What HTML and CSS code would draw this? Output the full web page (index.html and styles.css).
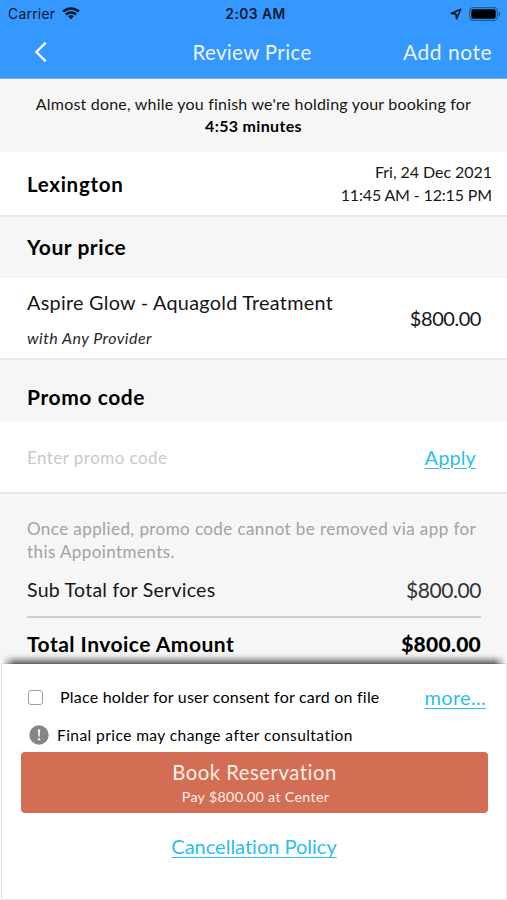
FILE: index.html
```
<!DOCTYPE html>
<html lang="en">
<head>
<meta charset="utf-8">
<title>Review Price</title>
<link rel="stylesheet" href="styles.css">
</head>
<body>
<div class="screen">
  <header class="top">
    <div class="status">
      <div class="status-left">
        <span class="carrier">Carrier</span>
        <svg class="wifi" width="18" height="13" viewBox="0 0 18 13" fill="none" stroke="#06182c" stroke-width="2.5"><path d="M1.2 4.7a11 11 0 0 1 15.6 0M3.9 7.6a7.2 7.2 0 0 1 10.2 0"/><path d="M9 12.2 6.2 9.4a4 4 0 0 1 5.6 0Z" fill="#06182c" stroke="none"/></svg>
      </div>
      <span class="clock">2:03 AM</span>
      <div class="status-right">
        <svg width="12" height="12" viewBox="0 0 12 12" fill="none" stroke="#06182c" stroke-width="1.6" stroke-linejoin="round"><path d="M10.8 1.2 1.2 5.4l4.8.7.5 4.8Z"/></svg>
        <svg width="32" height="14" viewBox="0 0 32 14"><rect x=".7" y=".7" width="27.6" height="12.6" rx="3.6" fill="none" stroke="#1e5b98" stroke-width="1.2"/><rect x="2.3" y="2.3" width="24.4" height="9.4" rx="2" fill="#000"/><path d="M29.8 4.6c1.8.6 1.8 4.2 0 4.8Z" fill="#1e5b98"/></svg>
      </div>
    </div>
    <nav class="nav">
      <svg class="back" width="14" height="22" viewBox="0 0 14 22" fill="none" stroke="#fff" stroke-width="2.3"><path d="M11.8 1.6 2.4 11l9.4 9.4"/></svg>
      <h1 class="nav-title">Review Price</h1>
      <a class="nav-action">Add note</a>
    </nav>
  </header>

  <section class="notice">
    <p class="notice-text">Almost done, while you finish we're holding your booking for</p>
    <p class="notice-time">4:53 minutes</p>
  </section>

  <section class="row place">
    <span class="place-name">Lexington</span>
    <div class="when"><p class="date">Fri, 24 Dec 2021</p><p class="time">11:45 AM - 12:15 PM</p></div>
  </section>

  <h2 class="section-head price-head">Your price</h2>
  <section class="row item">
    <div class="item-info"><p class="item-name">Aspire Glow - Aquagold Treatment</p><p class="item-by">with Any Provider</p></div>
    <span class="amount">$800.00</span>
  </section>

  <h2 class="section-head promo-head">Promo code</h2>
  <section class="row promo">
    <span class="promo-input">Enter promo code</span>
    <a class="link apply">Apply</a>
  </section>

  <section class="summary">
    <p class="promo-note">Once applied, promo code cannot be removed via app for<br>this Appointments.</p>
    <div class="line subtotal"><span class="sub-label">Sub Total for Services</span><span class="sub-amount">$800.00</span></div>
    <div class="line total"><span class="total-label">Total Invoice Amount</span><span class="total-amount">$800.00</span></div>
  </section>

  <footer class="sheet">
    <div class="consent">
      <span class="checkbox"></span>
      <span class="consent-text">Place holder for user consent for card on file</span>
      <a class="link more">more...</a>
    </div>
    <div class="warning">
      <svg width="20" height="20" viewBox="0 0 20 20"><circle cx="10" cy="10" r="9.7" fill="#858585"/><path d="M8.9 4.2h2.2l-.4 7.5H9.3Z" fill="#f4f4f4"/><circle cx="10" cy="14.3" r="1.2" fill="#f4f4f4"/></svg>
      <span class="warning-text">Final price may change after consultation</span>
    </div>
    <div class="book"><span class="book-title">Book Reservation</span><span class="book-sub">Pay $800.00 at Center</span></div>
    <a class="link policy">Cancellation Policy</a>
  </footer>
</div>
</body>
</html>
```
FILE: styles.css
```
* { box-sizing: border-box; }
body, h1, h2, p { margin: 0; }
body { font-family: Lato, "Open Sans", sans-serif; color: #161616; background: #f6f6f6; }
.screen { display: flex; flex-direction: column; width: 507px; height: 900px; overflow: hidden; white-space: nowrap; font-variant-ligatures: none; }

.top { height: 79px; background: #3598fe; border-bottom: 1px solid #6db4fb; flex: none; }
.status { height: 28px; display: grid; grid-template-columns: 1fr auto 1fr; align-items: center; padding: 0 6px 0 8px; font-family: Inter, sans-serif; color: #06182c; }
.status-left, .status-right { display: flex; align-items: center; padding-bottom: 1px; }
.status-left { gap: 7px; }
.status-right { justify-content: flex-end; gap: 7px; }
.carrier { font-size: 13.8px; letter-spacing: .3px; padding-top: 1px; }
.clock { font-size: 13.8px; font-weight: 600; letter-spacing: .45px; margin-left: 2px; }
.nav { height: 47px; display: grid; grid-template-columns: 1fr auto 1fr; align-items: center; padding: 0 15px 0 34px; color: #eaf5ff; line-height: 24px; }
.nav-title { font-size: 20.5px; font-weight: 400; letter-spacing: .36px; margin-left: -22px; }
.nav-action { font-size: 21px; letter-spacing: .5px; justify-self: end; }

.notice { height: 73px; padding-top: 14px; text-align: center; font-size: 16px; line-height: 22px; flex: none; }
.notice-text { letter-spacing: .2px; }
.notice-time { font-weight: 700; letter-spacing: .33px; color: #000; }

.row { display: flex; justify-content: space-between; align-items: center; background: #fff; border-bottom: 2px solid #e7e7e7; flex: none; }
.place { height: 65px; padding: 0 15px 0 27px; }
.place-name { font-size: 20.5px; font-weight: 700; letter-spacing: .7px; color: #000; }
.when { text-align: right; font-size: 16px; line-height: 23px; padding-bottom: 2px; }
.date { letter-spacing: -.05px; }
.time { letter-spacing: -.15px; }

.section-head { height: 61px; padding-left: 27px; font-size: 21px; line-height: 59px; color: #000; flex: none; }
.price-head { letter-spacing: .55px; }
.promo-head { line-height: 74px; letter-spacing: .58px; }

.item { height: 82px; padding: 0 26px 0 27px; }
.item-info { padding-top: 4px; }
.item-name { font-size: 19.8px; line-height: 24px; letter-spacing: .28px; }
.item-by { margin-top: 12px; font-size: 16px; line-height: 24px; font-style: italic; letter-spacing: .46px; color: #282828; }
.amount { font-size: 20px; letter-spacing: -.45px; }

.promo { height: 73px; padding: 0 31px 0 27px; }
.promo-input { font-size: 17px; letter-spacing: .45px; color: #c9c9c9; padding-top: 2px; }
.link { color: #2bbdf2; font-size: 20px; text-decoration: underline; text-decoration-thickness: 1px; text-underline-offset: 3px; text-decoration-skip-ink: auto; }
.apply { letter-spacing: .1px; }

.summary { padding: 23px 26px 0 27px; flex: none; height: 170px; }
.promo-note { font-size: 17px; line-height: 23px; letter-spacing: .42px; color: #a2a2a2; }
.line { display: flex; justify-content: space-between; align-items: center; }
.subtotal { height: 55px; padding-bottom: 1px; border-bottom: 2px solid #cfcfcf; }
.sub-label { font-size: 19.5px; letter-spacing: .26px; }
.sub-amount { font-size: 21px; letter-spacing: -.42px; color: #333; }
.total { height: 50px; color: #000; font-weight: 700; }
.total-label { font-size: 21px; letter-spacing: .48px; }
.total-amount { font-size: 21px; font-weight: 900; letter-spacing: .25px; }

.sheet { position: relative; display: flex; flex-direction: column; flex: 1; margin: 0 1px 1px 2px; background: #fff; box-shadow: 0 0 0 1px #e4e4e4; }
.sheet::before { content: ""; position: absolute; left: 0; right: 0; top: -11px; height: 11px; background: linear-gradient(to top, rgba(70,70,70,.85), rgba(90,90,90,.5) 35%, rgba(110,110,110,.14) 70%, transparent); mask-image: linear-gradient(to right, transparent, #000 12px, #000 calc(100% - 12px), transparent); }
.consent { display: flex; align-items: center; height: 66px; padding: 0 20px 0 26px; }
.checkbox { width: 15px; height: 15px; border: 1.5px solid #a0a0a0; border-radius: 3px; margin-right: 17px; }
.consent-text { font-size: 16px; letter-spacing: .22px; color: #000; padding-bottom: 2px; }
.more { margin-left: auto; letter-spacing: .3px; padding-bottom: 1px; }
.warning { display: flex; align-items: center; height: 22px; padding-left: 27px; gap: 8px; margin-top: -6px; }
.warning-text { font-size: 15.5px; letter-spacing: .44px; color: #000; }
.book { height: 61px; margin: 6px 18px 0 19px; border-radius: 4px; background: #d36e54; color: #fff0e8; display: flex; flex-direction: column; align-items: center; padding-top: 8px; }
.book-title { font-size: 20.3px; line-height: 25px; letter-spacing: .52px; }
.book-sub { font-size: 14.3px; line-height: 23px; letter-spacing: .3px; margin-left: 2px; }
.policy { align-self: center; margin-top: 21px; line-height: 24px; }
```
